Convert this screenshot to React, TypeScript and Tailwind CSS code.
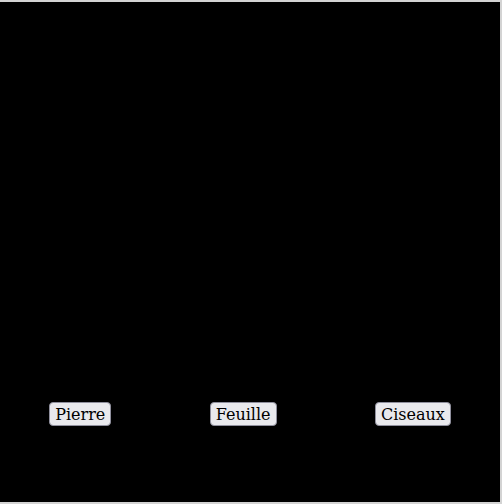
const choices = ['Pierre', 'Feuille', 'Ciseaux'];

export default function App() {
  return (
    <div className="h-[504px] w-[502px] bg-[#d3d3d3] pt-[2px] pr-[2px]">
      <div className="h-[500px] w-[500px] bg-black">
        {/* scene */}
        <div className="h-[400px]" />
        <div className="flex justify-around">
          {choices.map((c) => (
            <button
              key={c}
              className="rounded-[4px] border border-[#8f8f9d] bg-[#e9e9ed] px-[5px] pt-[2px] pb-[1px] text-[16px] leading-[19px] text-black font-['DejaVu_Serif',serif]"
            >
              {c}
            </button>
          ))}
        </div>
      </div>
    </div>
  );
}
